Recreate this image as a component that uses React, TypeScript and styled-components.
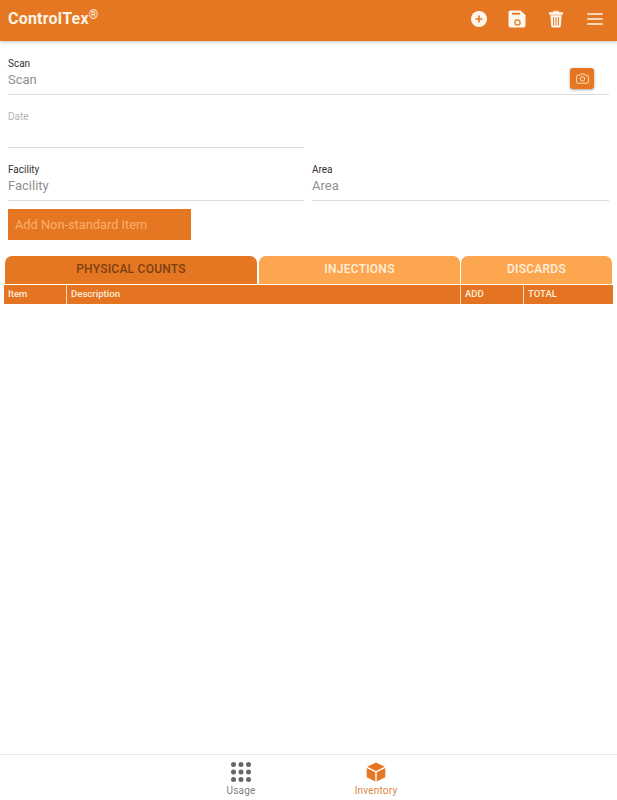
import React from "react";
import styled, { createGlobalStyle } from "styled-components";

const Global = createGlobalStyle`
  html, body { margin: 0; padding: 0; background: #fff; }
  body { font-family: Roboto, "Liberation Sans", sans-serif; }
  * { box-sizing: border-box; }
`;

const Page = styled.div`
  width: 617px;
  height: 800px;
  display: flex;
  flex-direction: column;
  overflow: hidden;
  background: #fff;
`;

const Header = styled.header`
  height: 41px;
  flex: none;
  background: #e67722;
  box-shadow: 0 1px 3px rgba(0, 0, 0, 0.25);
  display: flex;
  align-items: center;
  justify-content: space-between;
  padding: 0 12px 4px 8px;
  position: relative;
  z-index: 1;
`;

const Brand = styled.div`
  color: #fdf3e3;
  font-size: 16px;
  font-weight: 700;
  letter-spacing: 0.2px;
  line-height: 20px;
  sup { font-size: 12px; font-weight: 400; line-height: 0; vertical-align: 5px; }
`;

const HeaderIcons = styled.div`
  display: flex;
  align-items: center;
  gap: 19px;
`;

const IconSlot = styled.span`
  width: 20px;
  height: 20px;
  display: block;
  svg { display: block; }
`;

const Form = styled.div`
  padding: 16px 8px 0;
  display: flex;
  flex-direction: column;
`;

const Field = styled.div<{ $h: number }>`
  position: relative;
  height: ${(p) => p.$h}px;
  border-bottom: 1px solid #dcdcdc;
  padding-top: 1px;
`;

const Label = styled.div<{ $muted?: boolean }>`
  font-size: 10px;
  line-height: 12px;
  color: ${(p) => (p.$muted ? "#b4b4b4" : "#333")};
`;

const Placeholder = styled.div`
  font-size: 13px;
  line-height: 15px;
  margin-top: 2px;
  color: #8f8f8f;
`;

const CameraButton = styled.button`
  position: absolute;
  right: 15px;
  top: 11px;
  width: 24px;
  height: 21px;
  border: none;
  padding: 0;
  border-radius: 3px;
  background: #e67722;
  box-shadow: 0 1px 3px rgba(0, 0, 0, 0.35);
  display: flex;
  align-items: center;
  justify-content: center;
`;

const DateRow = styled.div`
  margin-top: 15px;
  width: 296px;
`;

const TwoCols = styled.div`
  margin-top: 15px;
  display: grid;
  grid-template-columns: 296px 297px;
  gap: 8px;
`;

const AddButton = styled.button`
  margin-top: 8px;
  width: 183px;
  height: 31px;
  border: none;
  background: #e67722;
  color: #f9b06c;
  font-family: inherit;
  font-size: 12.8px;
  text-align: left;
  padding: 0 7px;
`;

const Tabs = styled.div`
  margin: 16px 5px 0 5px;
  display: grid;
  grid-template-columns: 253px 201px 151px;
  gap: 1px;
  height: 28px;
`;

const Tab = styled.div<{ $active?: boolean }>`
  border-radius: 7px 7px 0 0;
  margin-right: ${(p) => (p.$active ? "1px" : "0")};
  padding-bottom: 2px;
  background: ${(p) => (p.$active ? "#e67722" : "#fda650")};
  color: ${(p) => (p.$active ? "#7c3f12" : "#fdf0df")};
  font-size: 12px;
  font-weight: 500;
  letter-spacing: 0.25px;
  display: flex;
  align-items: center;
  justify-content: center;
`;

const TableHead = styled.div`
  margin: 1px 4px 0 4px;
  height: 19px;
  display: grid;
  grid-template-columns: 62px 394px 63px 90px;
  gap: 0;
  background: #e47422;
`;

const HeadCell = styled.div`
  color: #fdebd7;
  font-size: 9.6px;
  font-weight: 500;
  line-height: 18px;
  padding-left: 4px;
  border-left: 1px solid #fbd9b6;
  &:first-child { border-left: none; }
`;

const Spacer = styled.div`
  flex: 1;
`;

const BottomNav = styled.nav`
  height: 46px;
  flex: none;
  border-top: 1px solid #e6e6e6;
  display: flex;
  justify-content: center;
  gap: 57px;
  padding-top: 7px;
`;

const NavItem = styled.div<{ $active?: boolean }>`
  width: 78px;
  display: flex;
  flex-direction: column;
  align-items: center;
  color: ${(p) => (p.$active ? "#d9863f" : "#808080")};
  font-size: 10px;
  letter-spacing: 0.2px;
  line-height: 12px;
  gap: 3px;
`;

const PlusIcon = () => (
  <svg width="20" height="20" viewBox="0 0 20 20">
    <circle cx="11" cy="10" r="8" fill="#fdf6ec" />
    <path d="M11 6.500v7M7.500 10h7" stroke="#e67722" strokeWidth="1.600" />
  </svg>
);

const SaveIcon = () => (
  <svg width="20" height="20" viewBox="0 0 20 20">
    <path d="M3.500 1.500h10l5 4.500v10.500a2 2 0 0 1-2 2h-13a2 2 0 0 1-2-2v-13a2 2 0 0 1 2-2z" fill="#fdf6ec" />
    <rect x="5" y="3.800" width="8" height="1.800" fill="#e67722" />
    <circle cx="10.500" cy="13.500" r="2.600" fill="none" stroke="#e67722" strokeWidth="1.200" />
  </svg>
);

const TrashIcon = () => (
  <svg width="20" height="20" viewBox="0 0 20 20">
    <path d="M3.200 3.600h13.600v1.800H3.200z M7.400 3.600V2.200h5.200v1.400" fill="#fdf6ec" stroke="#fdf6ec" strokeWidth=".6" />
    <path d="M4.400 6.200h11.200l-.8 11a1.600 1.600 0 0 1-1.600 1.400H6.800a1.600 1.600 0 0 1-1.600-1.400z" fill="#fdf6ec" />
    <path d="M7.600 8.200v8.200M10 8.200v8.200M12.400 8.200v8.200" stroke="#e67722" strokeWidth="1" />
  </svg>
);

const MenuIcon = () => (
  <svg width="20" height="20" viewBox="0 0 20 20">
    <path d="M3 5h14M3 10h14M3 15h14" stroke="#fdf6ec" strokeWidth="1.700" strokeLinecap="round" />
  </svg>
);

const CameraIcon = () => (
  <svg width="13" height="11" viewBox="0 0 13 11" fill="none" stroke="#fbe6cf" strokeWidth="0.9">
    <path d="M1.600 2.300h2.100l.8-1.300h4l.8 1.300h2.100a1 1 0 0 1 1 1v5.900a1 1 0 0 1-1 1H1.600a1 1 0 0 1-1-1V3.300a1 1 0 0 1 1-1z" />
    <circle cx="6.500" cy="5.900" r="2.200" />
  </svg>
);

const GridIcon = () => (
  <svg width="20" height="20" viewBox="0 0 20 20" fill="#666">
    {[2.5, 10, 17.5].flatMap((y) =>
      [2.5, 10, 17.5].map((x) => <circle key={`${x}-${y}`} cx={x} cy={y} r="2.5" />)
    )}
  </svg>
);

const CubeIcon = () => (
  <svg width="20" height="20" viewBox="0 0 20 20" fill="#e67722">
    <path d="M10 .4l8.800 4.300L10 9 1.200 4.700z" />
    <path d="M.7 6l8.600 4.300v9.300L.7 15.200z" />
    <path d="M19.300 6l-8.600 4.300v9.300l8.600-4.400z" />
  </svg>
);

export default function App() {
  return (
    <Page>
      <Global />
      <Header>
        <Brand>
          ControlTex<sup>®</sup>
        </Brand>
        <HeaderIcons>
          <IconSlot><PlusIcon /></IconSlot>
          <IconSlot><SaveIcon /></IconSlot>
          <IconSlot><TrashIcon /></IconSlot>
          <IconSlot><MenuIcon /></IconSlot>
        </HeaderIcons>
      </Header>
      <Form>
        <Field $h={38}>
          <Label>Scan</Label>
          <Placeholder>Scan</Placeholder>
          <CameraButton aria-label="Camera"><CameraIcon /></CameraButton>
        </Field>
        <DateRow>
          <Field $h={38}>
            <Label $muted>Date</Label>
          </Field>
        </DateRow>
        <TwoCols>
          <Field $h={38}>
            <Label>Facility</Label>
            <Placeholder>Facility</Placeholder>
          </Field>
          <Field $h={38}>
            <Label>Area</Label>
            <Placeholder>Area</Placeholder>
          </Field>
        </TwoCols>
        <AddButton>Add Non-standard Item</AddButton>
      </Form>
      <Tabs>
        <Tab $active>PHYSICAL COUNTS</Tab>
        <Tab>INJECTIONS</Tab>
        <Tab>DISCARDS</Tab>
      </Tabs>
      <TableHead>
        <HeadCell>Item</HeadCell>
        <HeadCell>Description</HeadCell>
        <HeadCell>ADD</HeadCell>
        <HeadCell>TOTAL</HeadCell>
      </TableHead>
      <Spacer />
      <BottomNav>
        <NavItem><GridIcon />Usage</NavItem>
        <NavItem $active><CubeIcon />Inventory</NavItem>
      </BottomNav>
    </Page>
  );
}
